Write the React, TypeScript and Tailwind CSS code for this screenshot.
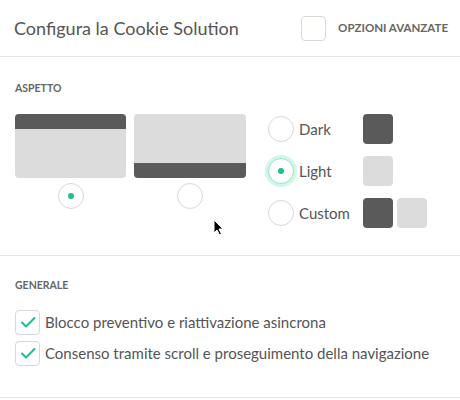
import React from "react";

const font = { fontFamily: "Lato, 'Noto Sans', sans-serif" };

function Radio({ checked = false, focus = false }: { checked?: boolean; focus?: boolean }) {
  return (
    <span
      className={
        "flex h-[26px] w-[26px] shrink-0 items-center justify-center rounded-full border bg-white " +
        (focus
          ? "border-[#8fe6c8] shadow-[0_0_0_3px_#d2f6e8]"
          : "border-[#d5d8de]")
      }
    >
      {checked && <span className="h-[6px] w-[6px] rounded-full bg-[#1cc08c]" />}
    </span>
  );
}

function Check({ checked = false }: { checked?: boolean }) {
  return (
    <span className="flex h-[25px] w-[25px] shrink-0 items-center justify-center rounded-[4px] border border-[#d5d8de] bg-white">
      {checked && (
        <svg width="16" height="12" viewBox="0 0 16 12" fill="none">
          <path d="M2 6.5l4 4L14.5 2" stroke="#1cc08c" strokeWidth="2" strokeLinecap="round" strokeLinejoin="round" />
        </svg>
      )}
    </span>
  );
}

function Swatch({ dark }: { dark?: boolean }) {
  return <span className={"h-[30px] w-[30px] rounded-[4px] " + (dark ? "bg-[#5a5a5a]" : "bg-[#dcdcdc]")} />;
}

export default function App() {
  return (
    <div className="relative h-[400px] w-[460px] overflow-hidden bg-white text-[#555]" style={font}>
      <header className="flex h-[57px] items-center border-b border-[#e6e6e6] pl-[14px] pr-[12px]">
        <h1 className="flex-1 text-[18px] text-[#555]">Configura la Cookie Solution</h1>
        <Check />
        <span className="ml-[12px] text-[11.5px] font-bold text-[#666]">OPZIONI AVANZATE</span>
      </header>

      <section className="border-b border-[#e6e6e6] px-[15px] pb-[27px] pt-[24px]">
        <h2 className="text-[10.5px] font-bold text-[#666]">ASPETTO</h2>
        <div className="mt-[17px] flex">
          <div className="flex flex-col items-center">
            <div className="flex h-[64px] w-[111px] flex-col overflow-hidden rounded-[4px] bg-[#dcdcdc]">
              <div className="h-[15px] bg-[#5a5a5a]" />
            </div>
            <div className="mt-[5px]">
              <Radio checked />
            </div>
          </div>
          <div className="ml-[8px] flex flex-col items-center">
            <div className="flex h-[64px] w-[112px] flex-col justify-end overflow-hidden rounded-[4px] bg-[#dcdcdc]">
              <div className="h-[15px] bg-[#5a5a5a]" />
            </div>
            <div className="mt-[5px]">
              <Radio />
            </div>
          </div>
          <div className="ml-[22px] flex flex-col gap-[12px]">
            <div className="flex h-[30px] items-center">
              <Radio />
              <span className="ml-[5px] w-[64px] text-[15px]">Dark</span>
              <Swatch dark />
            </div>
            <div className="flex h-[30px] items-center">
              <Radio checked focus />
              <span className="ml-[5px] w-[64px] text-[15px]">Light</span>
              <Swatch />
            </div>
            <div className="flex h-[30px] items-center">
              <Radio />
              <span className="ml-[5px] w-[64px] text-[15px]">Custom</span>
              <div className="flex gap-[4px]">
                <Swatch dark />
                <Swatch />
              </div>
            </div>
          </div>
        </div>
      </section>

      <section className="border-b border-[#e6e6e6] px-[15px] pb-[31px] pt-[22px]">
        <h2 className="text-[10.5px] font-bold leading-[15px] text-[#666]">GENERALE</h2>
        <div className="mt-[17px] flex flex-col gap-[6px]">
          <label className="flex h-[25px] items-center gap-[5px] text-[15px]">
            <Check checked />
            Blocco preventivo e riattivazione asincrona
          </label>
          <label className="flex h-[25px] items-center gap-[5px] text-[15px]">
            <Check checked />
            Consenso tramite scroll e proseguimento della navigazione
          </label>
        </div>
      </section>

      <svg className="absolute left-[213px] top-[219px]" width="11" height="17" viewBox="0 0 11 17">
        <path d="M1 1v13l3-3 2.5 5 2-1-2.5-5H10z" fill="#000" stroke="#fff" strokeWidth="1" />
      </svg>
    </div>
  );
}
